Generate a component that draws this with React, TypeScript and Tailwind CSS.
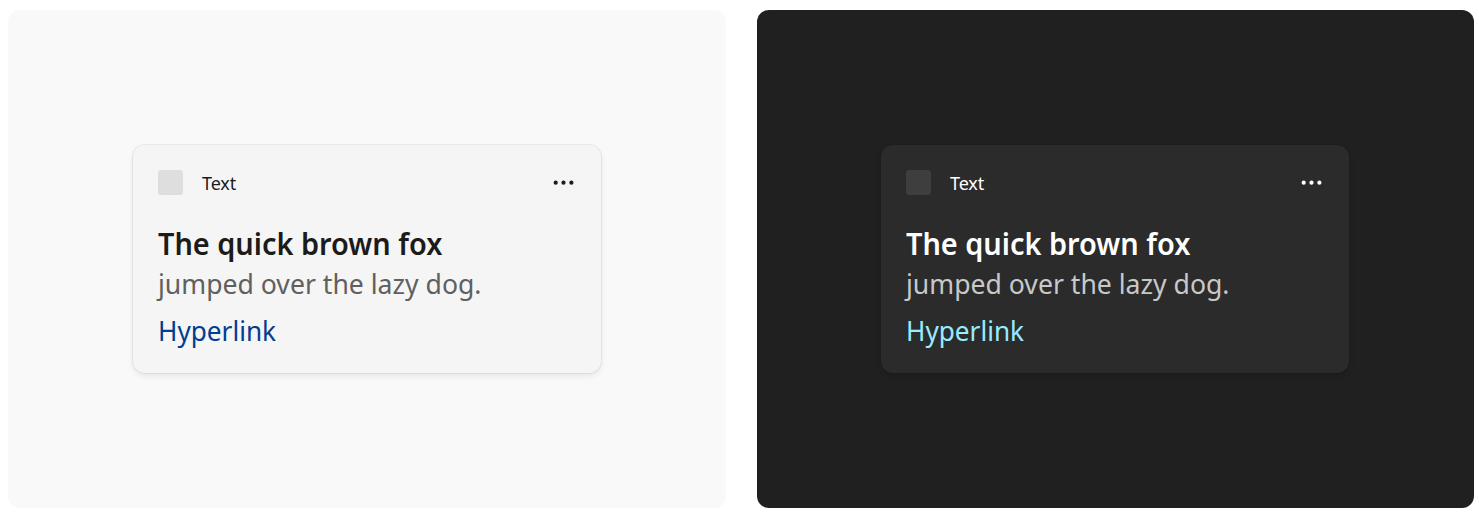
import { clsx } from "clsx";

function Card({ dark }: { dark?: boolean }) {
  return (
    <section className={clsx("flex h-[498px] justify-center rounded-xl pt-[135px]", dark ? "w-[717px] bg-[#202020] pr-px" : "w-[718px] bg-[#f9f9f9]")}>
      <article className={clsx("h-[228px] w-[468px] rounded-[12px] px-[25px] pt-[24px]", dark ? "bg-[#2b2b2b] shadow-[0_0_0_1px_rgba(0,0,0,0.06),0_3px_6px_rgba(0,0,0,0.12)]" : "bg-[#f5f5f5] shadow-[0_0_0_1px_rgba(0,0,0,0.06),0_3px_6px_rgba(0,0,0,0.08)]")}>
        <header className="flex h-[27px] items-start">
          <div className={clsx("mt-px size-[25px] rounded-[3px]", dark ? "bg-[#3e3e3e]" : "bg-[#dedede]")} />
          <span className={clsx("ml-[19px] pt-px text-[18px] leading-[26px] tracking-[-0.1px]", dark ? "text-white" : "text-[#1b1b1b]")}>Text</span>
          <svg className={clsx("mt-[10px] ml-auto", dark ? "fill-white" : "fill-[#1b1b1b]")} width="24" height="8" viewBox="0 0 24 8">
            <circle cx="3.7" cy="3.7" r="2.1" /><circle cx="11.5" cy="3.7" r="2.1" /><circle cx="19.4" cy="3.7" r="2.1" />
          </svg>
        </header>
        <h1 className={clsx("mt-[28px] ml-[0.4px] origin-left scale-x-[0.963] text-[30px] leading-[40px] font-semibold whitespace-nowrap", dark ? "text-white" : "text-[#1b1b1b]")}>The quick brown fox</h1>
        <p className={clsx("mt-[-1px] origin-left scale-x-[0.95] text-[28px] leading-[40px] whitespace-nowrap", dark ? "text-[#c8c8c8]" : "text-[#606060]")}>jumped over the lazy dog.</p>
        <a className={clsx("mt-[7px] block origin-left scale-x-[0.935] text-[28px] leading-[40px]", dark ? "text-[#99ebff]" : "text-[#003e92]")}>Hyperlink</a>
      </article>
    </section>
  );
}

export default function App() {
  return (
    <main className="flex h-[519px] w-[1479px] gap-[31px] bg-white pt-[10px] pl-[8px] font-['Noto_Sans',sans-serif]">
      <Card />
      <Card dark />
    </main>
  );
}
